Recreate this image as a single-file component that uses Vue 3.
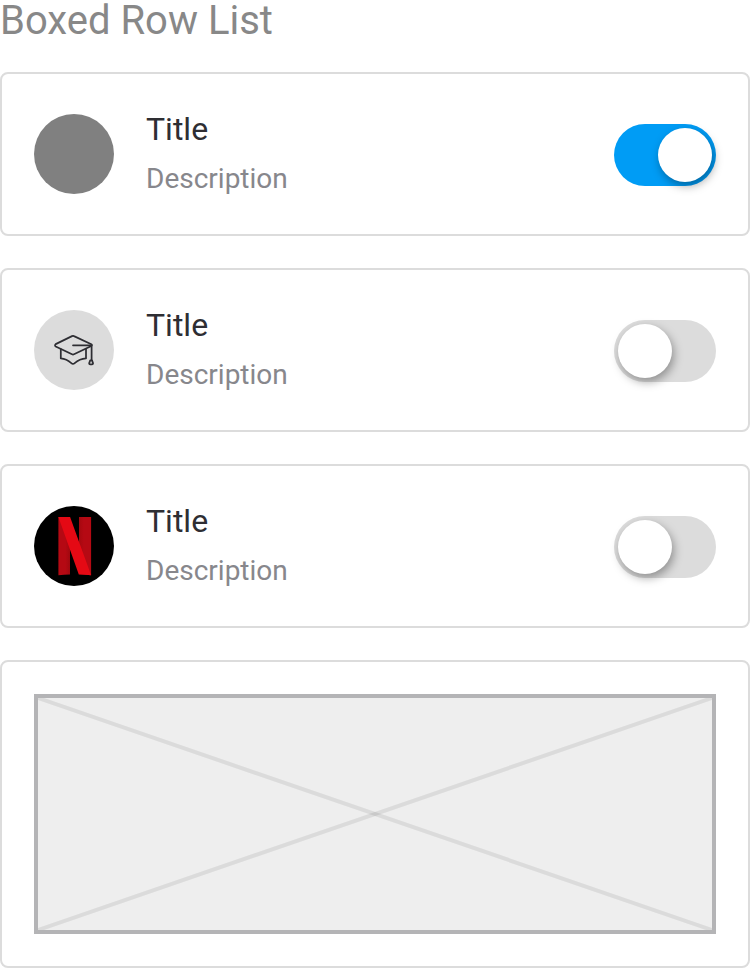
<script setup>
import { ref } from 'vue'

const rows = ref([
  { id: 1, icon: 'plain', title: 'Title', description: 'Description', on: true },
  { id: 2, icon: 'education', title: 'Title', description: 'Description', on: false },
  { id: 3, icon: 'netflix', title: 'Title', description: 'Description', on: false },
])
</script>

<template>
  <main class="page">
    <h1 class="heading">Boxed Row List</h1>
    <div class="list">
      <section v-for="row in rows" :key="row.id" class="card row">
        <div class="avatar" :class="row.icon">
          <svg v-if="row.icon === 'education'" viewBox="0 0 80 80" fill="none" stroke="#2e2e33" stroke-width="1.75" stroke-linecap="round" stroke-linejoin="round">
            <path d="M38 26.1Q39 25.6 40 26.1L57.3 34.2Q58.6 35.1 57.3 36L40 44.3Q39 44.8 38 44.3L21.7 36.5Q20.3 35.3 21.7 34.1Z" />
            <path d="M26.8 39V48.4Q32.5 48.9 37.3 53.1Q39 54.7 40.7 53.1Q45.5 48.9 52 48.4V39" />
            <path d="M39 35.3H57.6V50.2" />
            <path d="M56.2 50.4H58L59 53.1Q59.2 54.3 58 54.3H56.2Q55 54.3 55.2 53.1Z" />
          </svg>
          <svg v-else-if="row.icon === 'netflix'" viewBox="0 0 80 80">
            <defs>
              <linearGradient id="left-bar" x1="0" y1="0" x2="1" y2="0">
                <stop offset=".6" stop-color="#b50913" />
                <stop offset="1" stop-color="#a0080f" />
              </linearGradient>
              <linearGradient id="right-bar" x1="0" y1="0" x2="1" y2="0">
                <stop offset="0" stop-color="#a5080f" />
                <stop offset=".4" stop-color="#b50913" />
              </linearGradient>
            </defs>
            <path d="M24.4 11H36V68.5Q30 68.6 24.4 69.2Z" fill="url(#left-bar)" />
            <path d="M45 11H57.1V69.2L45 68Z" fill="url(#right-bar)" />
            <path d="M24.4 11H36.1L57.1 69.2Q51 68.6 44.8 68.4Z" fill="#e50914" />
          </svg>
        </div>
        <div class="text">
          <div class="title">{{ row.title }}</div>
          <div class="description">{{ row.description }}</div>
        </div>
        <button class="toggle" :class="{ on: row.on }" type="button" role="switch" :aria-checked="row.on" @click="row.on = !row.on">
          <span class="knob"></span>
        </button>
      </section>
      <section class="card slot">
        <svg class="placeholder" viewBox="0 0 674 232" fill="none" stroke="#000" stroke-opacity=".08" stroke-width="4">
          <path d="M0 0L674 232" />
          <path d="M674 0L0 232" />
        </svg>
      </section>
    </div>
  </main>
</template>

<style>
body {
  margin: 0;
  background: #fff;
}
</style>

<style scoped>
.page {
  width: 750px;
  font-family: Roboto, "Liberation Sans", sans-serif;
}
.heading {
  margin: 0;
  height: 72px;
  font-size: 40px;
  line-height: 42px;
  font-weight: 400;
  color: #888;
}
.list {
  display: flex;
  flex-direction: column;
  gap: 32px;
}
.card {
  box-sizing: border-box;
  border: 2px solid #dcdcdc;
  border-radius: 8px;
  padding: 32px;
  background: #fff;
}
.row {
  display: flex;
  align-items: center;
  height: 164px;
}
.avatar {
  width: 80px;
  height: 80px;
  border-radius: 50%;
  overflow: hidden;
  flex: none;
}
.avatar svg {
  display: block;
  width: 80px;
  height: 80px;
}
.plain {
  background: #808080;
}
.education {
  background: #dcdcdc;
}
.netflix {
  background: #000;
}
.text {
  flex: 1;
  margin: 0 0 2px 32px;
}
.title {
  font-size: 32px;
  line-height: 48px;
  color: #2e2e33;
}
.description {
  margin-top: 4px;
  font-size: 28px;
  line-height: 44px;
  color: #87878c;
}
.toggle {
  display: flex;
  box-sizing: border-box;
  width: 102px;
  height: 62px;
  margin: 2px 0 0;
  padding: 4px;
  border: 0;
  border-radius: 31px;
  background: #dcdcdc;
}
.toggle.on {
  justify-content: flex-end;
  background: #009cf5;
}
.knob {
  width: 54px;
  height: 54px;
  border-radius: 50%;
  background: #fff;
  box-shadow: 2px 4px 10px rgba(0, 0, 0, 0.35);
}
.slot {
  height: 308px;
}
.placeholder {
  display: block;
  box-sizing: border-box;
  width: 682px;
  height: 240px;
  border: 4px solid #b4b4b6;
  background: #eee;
}
</style>
